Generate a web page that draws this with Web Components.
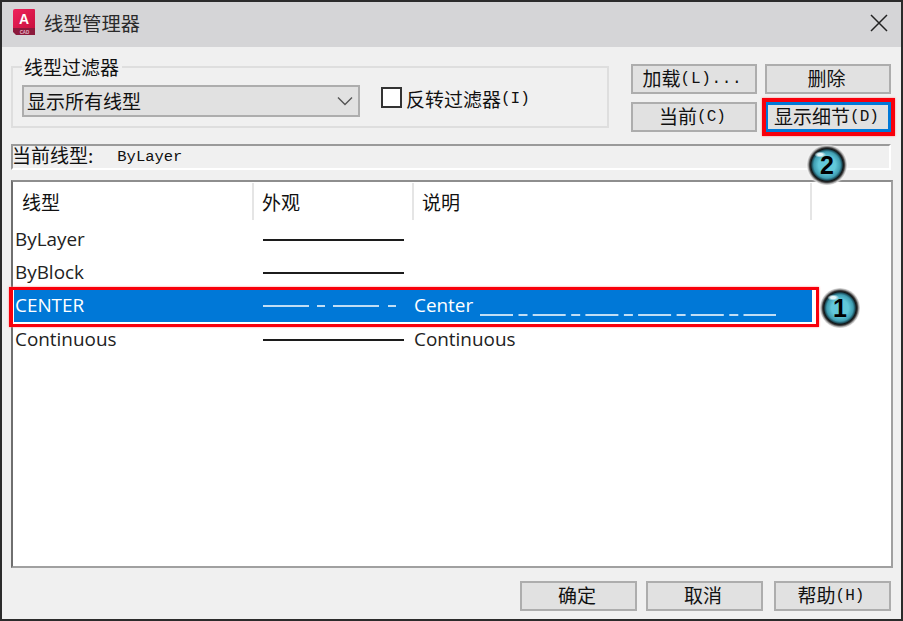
<!DOCTYPE html>
<html lang="zh">
<head>
<meta charset="utf-8">
<title>线型管理器</title>
<style>
    html, body { margin: 0; padding: 0; background: #fff; }
    body { font-family: "Noto Sans CJK SC", sans-serif; font-size: 19px; color: #111; }
</style>
</head>
<body>
<linetype-dialog>
    <title-bar slot="title">线型管理器</title-bar>

    <filter-group slot="filter" legend="线型过滤器" value="显示所有线型" invert="反转过滤器" invert-key="(I)"></filter-group>

    <win-button slot="actions" key="(L)..." wide-key>加载</win-button>
    <win-button slot="actions">删除</win-button>
    <win-button slot="actions" key="(C)">当前</win-button>
    <win-button slot="actions" key="(D)" marked>显示细节</win-button>

    <current-bar slot="current" label="当前线型:" value="ByLayer"></current-bar>

    <linetype-list slot="list">
        <linetype-row name="ByLayer" sample="solid"></linetype-row>
        <linetype-row name="ByBlock" sample="solid"></linetype-row>
        <linetype-row name="CENTER" sample="center" desc="Center" selected></linetype-row>
        <linetype-row name="Continuous" sample="solid" desc="Continuous"></linetype-row>
    </linetype-list>

    <win-button slot="footer">确定</win-button>
    <win-button slot="footer">取消</win-button>
    <win-button slot="footer" key="(H)" push>帮助</win-button>

    <step-badge slot="badges" style="left:805px;top:143px">2</step-badge>
    <step-badge slot="badges" style="left:818px;top:286px">1</step-badge>
</linetype-dialog>

<script>
const MONO = '"Liberation Mono", monospace';

class LinetypeDialog extends HTMLElement {
    constructor() {
        super();
        this.attachShadow({ mode: 'open' });
        this.shadowRoot.innerHTML = `
            <style>
                :host {
                    display: flex;
                    flex-direction: column;
                    position: relative;
                    box-sizing: border-box;
                    width: 903px;
                    height: 621px;
                    overflow: hidden;
                    border: 2px solid #2b2b2b;
                    background: #f0f0f0;
                }
                .top {
                    display: grid;
                    grid-template-columns: 598px 1fr;
                    column-gap: 22px;
                    padding: 7px 10px 0 9px;
                    height: 81px;
                }
                .actions {
                    display: grid;
                    grid-template-columns: 126px 126px;
                    grid-auto-rows: 30px;
                    gap: 8px 8px;
                    padding-top: 10px;
                }
                .current { padding: 9px 10px 0 9px; }
                .list { padding: 10px 8px 0 9px; }
                .footer {
                    display: grid;
                    grid-template-columns: 117px 117px 119px;
                    grid-auto-rows: 30px;
                    justify-content: end;
                    column-gap: 9px;
                    padding: 13px 10px 0 0;
                }
            </style>
            <slot name="title"></slot>
            <div class="top">
                <slot name="filter"></slot>
                <div class="actions"><slot name="actions"></slot></div>
            </div>
            <div class="current"><slot name="current"></slot></div>
            <div class="list"><slot name="list"></slot></div>
            <div class="footer"><slot name="footer"></slot></div>
            <slot name="badges"></slot>
        `;
    }
}

class TitleBar extends HTMLElement {
    constructor() {
        super();
        this.attachShadow({ mode: 'open' });
        this.shadowRoot.innerHTML = `
            <style>
                :host {
                    display: flex;
                    align-items: center;
                    box-sizing: border-box;
                    height: 45px;
                    padding: 0 12px 4px 10px;
                    background: #d5d5d7;
                    color: #2a2a2a;
                    font-size: 19.2px;
                }
                .logo { width: 24px; height: 27px; margin-right: 8px; flex: none; }
                .text { flex: 1; }
                .close { width: 20px; height: 20px; flex: none; }
            </style>
            <svg class="logo" viewBox="0 0 24 27">
                <defs>
                    <linearGradient id="lg" x1="0" y1="0" x2="1" y2="1">
                        <stop offset="0" stop-color="#f0245c"/>
                        <stop offset="1" stop-color="#c9113f"/>
                    </linearGradient>
                </defs>
                <path d="M3 0H22Q23 0 23 1V19H1V2Q1 0 3 0Z" fill="url(#lg)"/>
                <path d="M1 19H23V26H4L1 23Z" fill="#8c1a3c"/>
                <text x="12" y="15" text-anchor="middle" font-family="Liberation Sans, sans-serif" font-size="14" font-weight="700" fill="#fff">A</text>
                <text x="12.5" y="24.5" text-anchor="middle" font-family="Liberation Sans, sans-serif" font-size="4.5" font-weight="700" fill="#e9b9c8">CAD</text>
            </svg>
            <span class="text"><slot></slot></span>
            <svg class="close" viewBox="0 0 20 20">
                <path d="M2 2L18 18M18 2L2 18" stroke="#222" stroke-width="1.5" fill="none"/>
            </svg>
        `;
    }
}

class FilterGroup extends HTMLElement {
    constructor() {
        super();
        this.attachShadow({ mode: 'open' });
        this.shadowRoot.innerHTML = `
            <style>
                :host { display: block; }
                fieldset {
                    box-sizing: border-box;
                    height: 74px;
                    margin: 0;
                    padding: 5px 9px 0 9px;
                    border: 2px solid #dedede;
                }
                legend {
                    margin-left: 0;
                    padding: 0 3px 0 2px;
                    line-height: 26px;
                    height: 26px;
                }
                .line { display: flex; align-items: flex-start; }
                .select {
                    box-sizing: border-box;
                    display: flex;
                    align-items: center;
                    justify-content: space-between;
                    width: 338px;
                    height: 32px;
                    padding: 0 5px 2px 3px;
                    border: 2px solid #adadad;
                    background: #e1e1e1;
                }
                .select svg { width: 16px; height: 10px; margin-top: 2px; }
                .check {
                    display: flex;
                    align-items: center;
                    margin: 0 0 0 21px;
                }
                .box {
                    box-sizing: border-box;
                    width: 21px;
                    height: 21px;
                    margin: 0 4px 2px 0;
                    border: 2px solid #333;
                    background: #fff;
                }
                .key { font-family: ${MONO}; font-size: 16px; }
            </style>
            <fieldset>
                <legend></legend>
                <div class="line">
                    <div class="select">
                        <span class="value"></span>
                        <svg viewBox="0 0 16 10"><path d="M1 1.5L8 8.5L15 1.5" stroke="#555" stroke-width="1.4" fill="none"/></svg>
                    </div>
                    <div class="check">
                        <span class="box"></span>
                        <span class="invert"></span><span class="key"></span>
                    </div>
                </div>
            </fieldset>
        `;
    }
    connectedCallback() {
        const root = this.shadowRoot;
        root.querySelector('legend').textContent = this.getAttribute('legend');
        root.querySelector('.value').textContent = this.getAttribute('value');
        root.querySelector('.invert').textContent = this.getAttribute('invert');
        root.querySelector('.key').textContent = this.getAttribute('invert-key');
    }
}

class WinButton extends HTMLElement {
    constructor() {
        super();
        this.attachShadow({ mode: 'open' });
        this.shadowRoot.innerHTML = `
            <style>
                :host {
                    display: flex;
                    align-items: center;
                    justify-content: center;
                    position: relative;
                    box-sizing: border-box;
                    padding-right: 3px;
                    border: 2px solid #adadad;
                    background: #e1e1e1;
                    white-space: nowrap;
                }
                :host([push]) { margin-left: 2px; }
                :host([marked]) { border: 3px solid #0078d7; }
                :host([marked])::after {
                    content: "";
                    position: absolute;
                    inset: -7px -7px -7px -6px;
                    border: 4px solid #f8000c;
                    box-shadow: 0 0 2px #ff8a8a;
                }
                .label { margin-bottom: 4px; }
                .key { font-family: ${MONO}; font-size: 16px; margin-bottom: 1px; }
                :host([wide-key]) .key { letter-spacing: .7px; }
            </style>
            <span class="label"><slot></slot></span><span class="key"></span>
        `;
    }
    connectedCallback() {
        this.shadowRoot.querySelector('.key').textContent = this.getAttribute('key') || '';
    }
}

class CurrentBar extends HTMLElement {
    constructor() {
        super();
        this.attachShadow({ mode: 'open' });
        this.shadowRoot.innerHTML = `
            <style>
                :host {
                    display: flex;
                    align-items: center;
                    box-sizing: border-box;
                    height: 26px;
                    border: 2px solid;
                    border-color: #9a9a9a #fff #fff #9a9a9a;
                }
                .label { margin: 0 0 5px -1px; }
                .value {
                    margin: 0 0 1px 24px;
                    font-family: ${MONO};
                    font-size: 15.5px;
                }
            </style>
            <span class="label"></span><span class="value"></span>
        `;
    }
    connectedCallback() {
        this.shadowRoot.querySelector('.label').textContent = this.getAttribute('label');
        this.shadowRoot.querySelector('.value').textContent = this.getAttribute('value');
    }
}

class LinetypeList extends HTMLElement {
    constructor() {
        super();
        this.attachShadow({ mode: 'open' });
        this.shadowRoot.innerHTML = `
            <style>
                :host {
                    display: block;
                    box-sizing: border-box;
                    height: 388px;
                    padding: 1px 0 0 1px;
                    border: 2px solid;
                    border-color: #8e8e8e #a0a0a0 #a0a0a0 #6f6f6f;
                    background: #fff;
                }
                .head {
                    display: grid;
                    grid-template-columns: 240px 160px 398px;
                    height: 39px;
                    width: 798px;
                }
                .head span {
                    display: flex;
                    align-items: center;
                    height: 37px;
                    padding-left: 8px;
                    border-right: 2px solid #e5e5e5;
                }
            </style>
            <div class="head">
                <span>线型</span>
                <span>外观</span>
                <span>说明</span>
            </div>
            <slot></slot>
        `;
    }
}

class LinetypeRow extends HTMLElement {
    constructor() {
        super();
        this.attachShadow({ mode: 'open' });
        this.shadowRoot.innerHTML = `
            <style>
                :host {
                    display: grid;
                    grid-template-columns: 249px 151px 1fr;
                    align-items: center;
                    position: relative;
                    width: 798px;
                    height: 33.33px;
                    font-family: "Open Sans", sans-serif;
                    font-size: 18.9px;
                    color: #222;
                }
                :host([selected]) {
                    background: #0078d7;
                    color: #fff;
                }
                :host([selected])::after {
                    content: "";
                    position: absolute;
                    inset: -2px -7px -5px -5px;
                    border: 3px solid #f8000c;
                    border-left-width: 4px;
                    box-shadow: 0 0 2px #ff8a8a;
                    box-sizing: border-box;
                    pointer-events: none;
                }
                :host([selected])::before {
                    content: "";
                    position: absolute;
                    left: 0;
                    right: -3px;
                    top: 0;
                    bottom: -1px;
                    border: solid #fff;
                    border-width: 0 3px 1px 0;
                }
                .name { padding-left: 1px; }
                .look { margin-top: 2px; }
                svg { display: block; width: 141px; height: 6px; }
                .desc { display: flex; align-items: center; }
                .tail { width: 296px; height: 6px; margin: 20px 0 0 7px; }
            </style>
            <span class="name"></span>
            <span class="look"></span>
            <span class="desc"></span>
        `;
    }
    connectedCallback() {
        const root = this.shadowRoot;
        const sample = this.getAttribute('sample');
        const desc = this.getAttribute('desc') || '';
        root.querySelector('.name').textContent = this.getAttribute('name');
        root.querySelector('.look').innerHTML = sample === 'center'
            ? '<svg viewBox="0 0 141 6"><path d="M0 3H46M54 3H62M70 3H116M125 3H133" stroke="#fff" stroke-width="1.6" fill="none"/></svg>'
            : '<svg viewBox="0 0 141 6"><path d="M0 3H141" stroke="#1c1c1c" stroke-width="2" fill="none"/></svg>';
        root.querySelector('.desc').textContent = desc;
        if (sample === 'center') {
            // the description of a dashed linetype ends with its own pattern
            root.querySelector('.desc').insertAdjacentHTML('beforeend',
                '<svg class="tail" viewBox="0 0 296 6"><path d="M0 3H296" stroke="#fff" stroke-width="1.6" stroke-dasharray="33 5.5 9 5.2" fill="none"/></svg>');
        }
    }
}

class StepBadge extends HTMLElement {
    constructor() {
        super();
        this.attachShadow({ mode: 'open' });
        this.shadowRoot.innerHTML = `
            <style>
                :host {
                    display: flex;
                    align-items: center;
                    justify-content: center;
                    position: absolute;
                    box-sizing: border-box;
                    width: 40px;
                    height: 40px;
                    border-radius: 50%;
                    background:
                        radial-gradient(ellipse 6px 3px at 33% 24%, #e4f7fa 0 40%, transparent 100%),
                        radial-gradient(circle closest-side, #62c8da 0 42%, #3f9db1 66%, #1c4d5a 76%, #0f1416 81%, #3a3a3a 87%, #b0b0b0 94%, #e4e4e4 100%);
                    box-shadow: 0 0 2px rgba(255,255,255,.9);
                    color: #000;
                    font-family: "Liberation Sans", sans-serif;
                    font-size: 25px;
                    font-weight: 700;
                }
            </style>
            <slot></slot>
        `;
    }
}

customElements.define('linetype-dialog', LinetypeDialog);
customElements.define('title-bar', TitleBar);
customElements.define('filter-group', FilterGroup);
customElements.define('win-button', WinButton);
customElements.define('current-bar', CurrentBar);
customElements.define('linetype-list', LinetypeList);
customElements.define('linetype-row', LinetypeRow);
customElements.define('step-badge', StepBadge);
</script>
</body>
</html>
